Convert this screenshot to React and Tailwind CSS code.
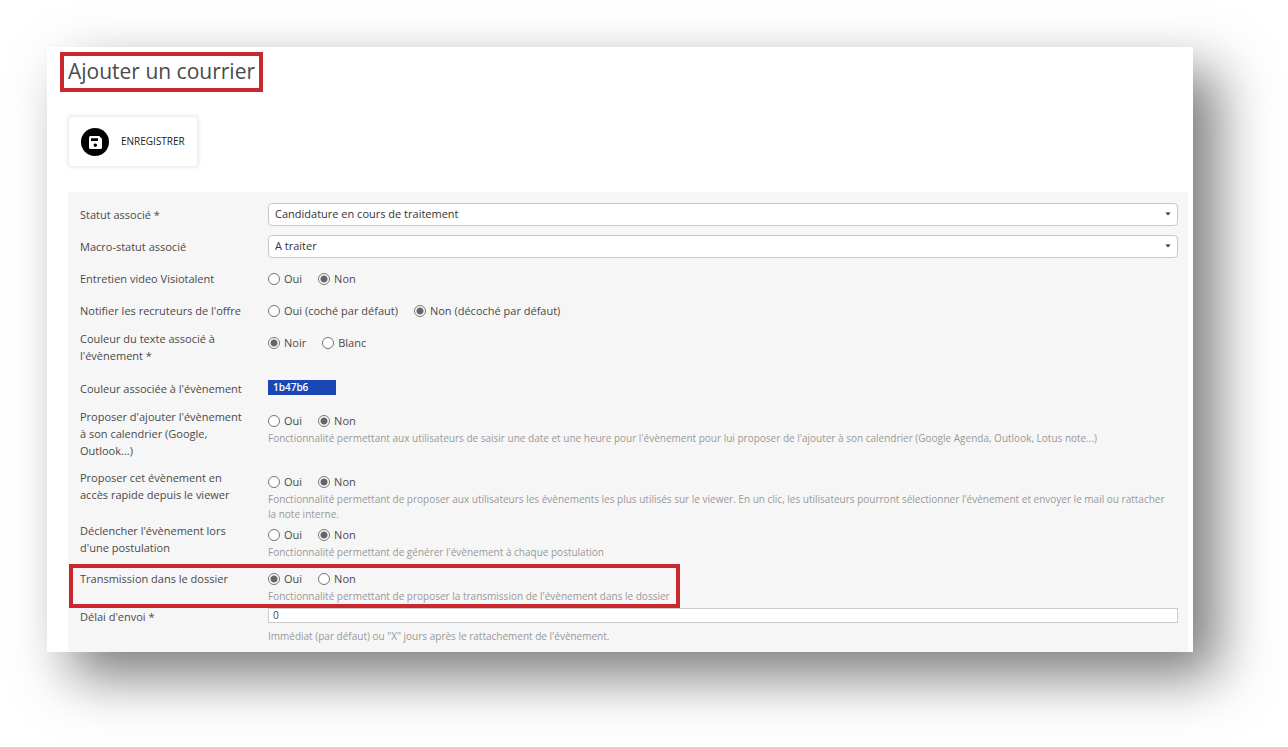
import { useId } from "react";

const TEXT = "text-[11px] leading-[17px]";

function Row({ label, htmlFor, group, raised, minHeight = "min-h-8", highlighted, children }) {
  const id = useId();
  const labelClass = `${TEXT} pl-3 pr-5 ${raised ? "" : "pt-1"}`;
  return (
    <div
      className={`relative grid grid-cols-[200px_minmax(0,1fr)] ${minHeight}`}
      role={group ? "radiogroup" : undefined}
      aria-labelledby={group ? id : undefined}
    >
      {group ? (
        <span id={id} className={labelClass}>{label}</span>
      ) : (
        <label htmlFor={htmlFor} className={labelClass}>{label}</label>
      )}
      <div className="pr-2.5">{children}</div>
      {highlighted && (
        <div className="pointer-events-none absolute -top-0.5 -bottom-1 left-px w-[611px] border-4 border-[#c9282f]" />
      )}
    </div>
  );
}

function Radios({ name, options, value }) {
  return (
    <div className={`flex gap-4 pt-1 ${TEXT}`}>
      {options.map((option) => (
        <label key={option} className="flex items-center gap-1">
          <input
            type="radio"
            name={name}
            defaultChecked={option === value}
            className="size-3 appearance-none rounded-full border border-[#767676] bg-white checked:bg-[radial-gradient(circle,#666_3px,#fff_4px)]"
          />
          <span>{option}</span>
        </label>
      ))}
    </div>
  );
}

function Help({ children }) {
  return <p className="mt-0.5 pr-2 text-[10px] leading-[15px] text-[#999]">{children}</p>;
}

function Select({ id, value }) {
  return (
    <div className="relative pt-px">
      <select
        id={id}
        className="block h-[23px] w-full appearance-none rounded-sm border border-[#c8c8c8] bg-white px-1.5 text-[11px] text-[#333]"
      >
        <option>{value}</option>
      </select>
      <svg className="pointer-events-none absolute top-2.5 right-[7px] h-1 w-1.5" viewBox="0 0 6 4" aria-hidden="true">
        <path d="M0.5 0.5h5L3 3.5z" fill="#333" />
      </svg>
    </div>
  );
}

function SaveIcon() {
  return (
    <svg className="size-7" viewBox="0 0 28 28" aria-hidden="true">
      <circle cx="14" cy="14" r="14" fill="#000" />
      <path
        fillRule="evenodd"
        fill="#fff"
        d="M9.5 8h8.7L21 10.8v8.7a1.5 1.5 0 0 1-1.5 1.5h-10A1.5 1.5 0 0 1 8 19.5v-10A1.5 1.5 0 0 1 9.5 8zM10 10.3v2.7h7v-2.7zM14.3 15.4a1.7 1.7 0 1 0 0.01 0z"
      />
    </svg>
  );
}

const OUI_NON = ["Oui", "Non"];

export default function App() {
  return (
    <div className="bg-white pt-[47px] pr-[95px] pb-[95px] pl-[47px] font-['Open_Sans',sans-serif] text-[#4a4a4a]">
      <main className="bg-white pt-[5px] pr-[5px] shadow-[24px_24px_52px_rgba(0,0,0,0.52)]">
        <h1 className="ml-[13px] flex h-10 w-fit items-center border-4 border-[#c9282f] px-1 text-[21px] text-[#4a4a4a]">
          Ajouter un courrier
        </h1>

        <button
          type="button"
          className="mt-6 ml-[21px] flex h-[51px] items-center gap-3 rounded-sm border border-[#eee] bg-white px-3 text-[10px] text-[#222] shadow-[0_0_4px_rgba(0,0,0,0.12)]"
        >
          <SaveIcon />
          ENREGISTRER
        </button>

        <form className="mt-[25px] ml-[21px] bg-[#f6f6f6] pt-2.5 pb-2">
          <Row label="Statut associé *" htmlFor="statut">
            <Select id="statut" value="Candidature en cours de traitement" />
          </Row>
          <Row label="Macro-statut associé" htmlFor="macro">
            <Select id="macro" value="A traiter" />
          </Row>
          <Row group label="Entretien video Visiotalent">
            <Radios name="video" options={OUI_NON} value="Non" />
          </Row>
          <Row group label="Notifier les recruteurs de l'offre">
            <Radios
              name="notifier"
              options={["Oui (coché par défaut)", "Non (décoché par défaut)"]}
              value="Non (décoché par défaut)"
            />
          </Row>
          <Row group raised minHeight="min-h-[46px]" label="Couleur du texte associé à l'évènement *">
            <Radios name="texte" options={["Noir", "Blanc"]} value="Noir" />
          </Row>
          <Row label="Couleur associée à l'évènement" htmlFor="couleur">
            <div className="pt-1">
              <input
                id="couleur"
                type="text"
                defaultValue="1b47b6"
                className="block h-[15px] w-[68px] bg-[#1b47b6] px-[5px] text-[10px] font-semibold text-white"
              />
            </div>
          </Row>
          <Row
            group
            raised
            minHeight="min-h-[61px]"
            label="Proposer d'ajouter l'évènement à son calendrier (Google, Outlook...)"
          >
            <Radios name="calendrier" options={OUI_NON} value="Non" />
            <Help>
              Fonctionnalité permettant aux utilisateurs de saisir une date et une heure pour l'évènement pour lui
              proposer de l'ajouter à son calendrier (Google Agenda, Outlook, Lotus note...)
            </Help>
          </Row>
          <Row group raised label="Proposer cet évènement en accès rapide depuis le viewer">
            <Radios name="viewer" options={OUI_NON} value="Non" />
            <Help>
              Fonctionnalité permettant de proposer aux utilisateurs les évènements les plus utilisés sur le viewer. En
              un clic, les utilisateurs pourront sélectionner l'évènement et envoyer le mail ou rattacher la note
              interne.
            </Help>
          </Row>
          <Row group raised minHeight="min-h-11" label="Déclencher l'évènement lors d'une postulation">
            <Radios name="postulation" options={OUI_NON} value="Non" />
            <Help>Fonctionnalité permettant de générer l'évènement à chaque postulation</Help>
          </Row>
          <Row group highlighted label="Transmission dans le dossier">
            <Radios name="transmission" options={OUI_NON} value="Oui" />
            <Help>Fonctionnalité permettant de proposer la transmission de l'évènement dans le dossier</Help>
          </Row>
          <Row label="Délai d'envoi *" htmlFor="delai">
            <div className="pt-1 pb-1">
              <input
                id="delai"
                type="text"
                defaultValue="0"
                className="block h-[15px] w-full border border-[#ccc] bg-white px-1 text-[10px] text-[#444]"
              />
            </div>
            <Help>Immédiat (par défaut) ou "X" jours après le rattachement de l'évènement.</Help>
          </Row>
        </form>
      </main>
    </div>
  );
}
